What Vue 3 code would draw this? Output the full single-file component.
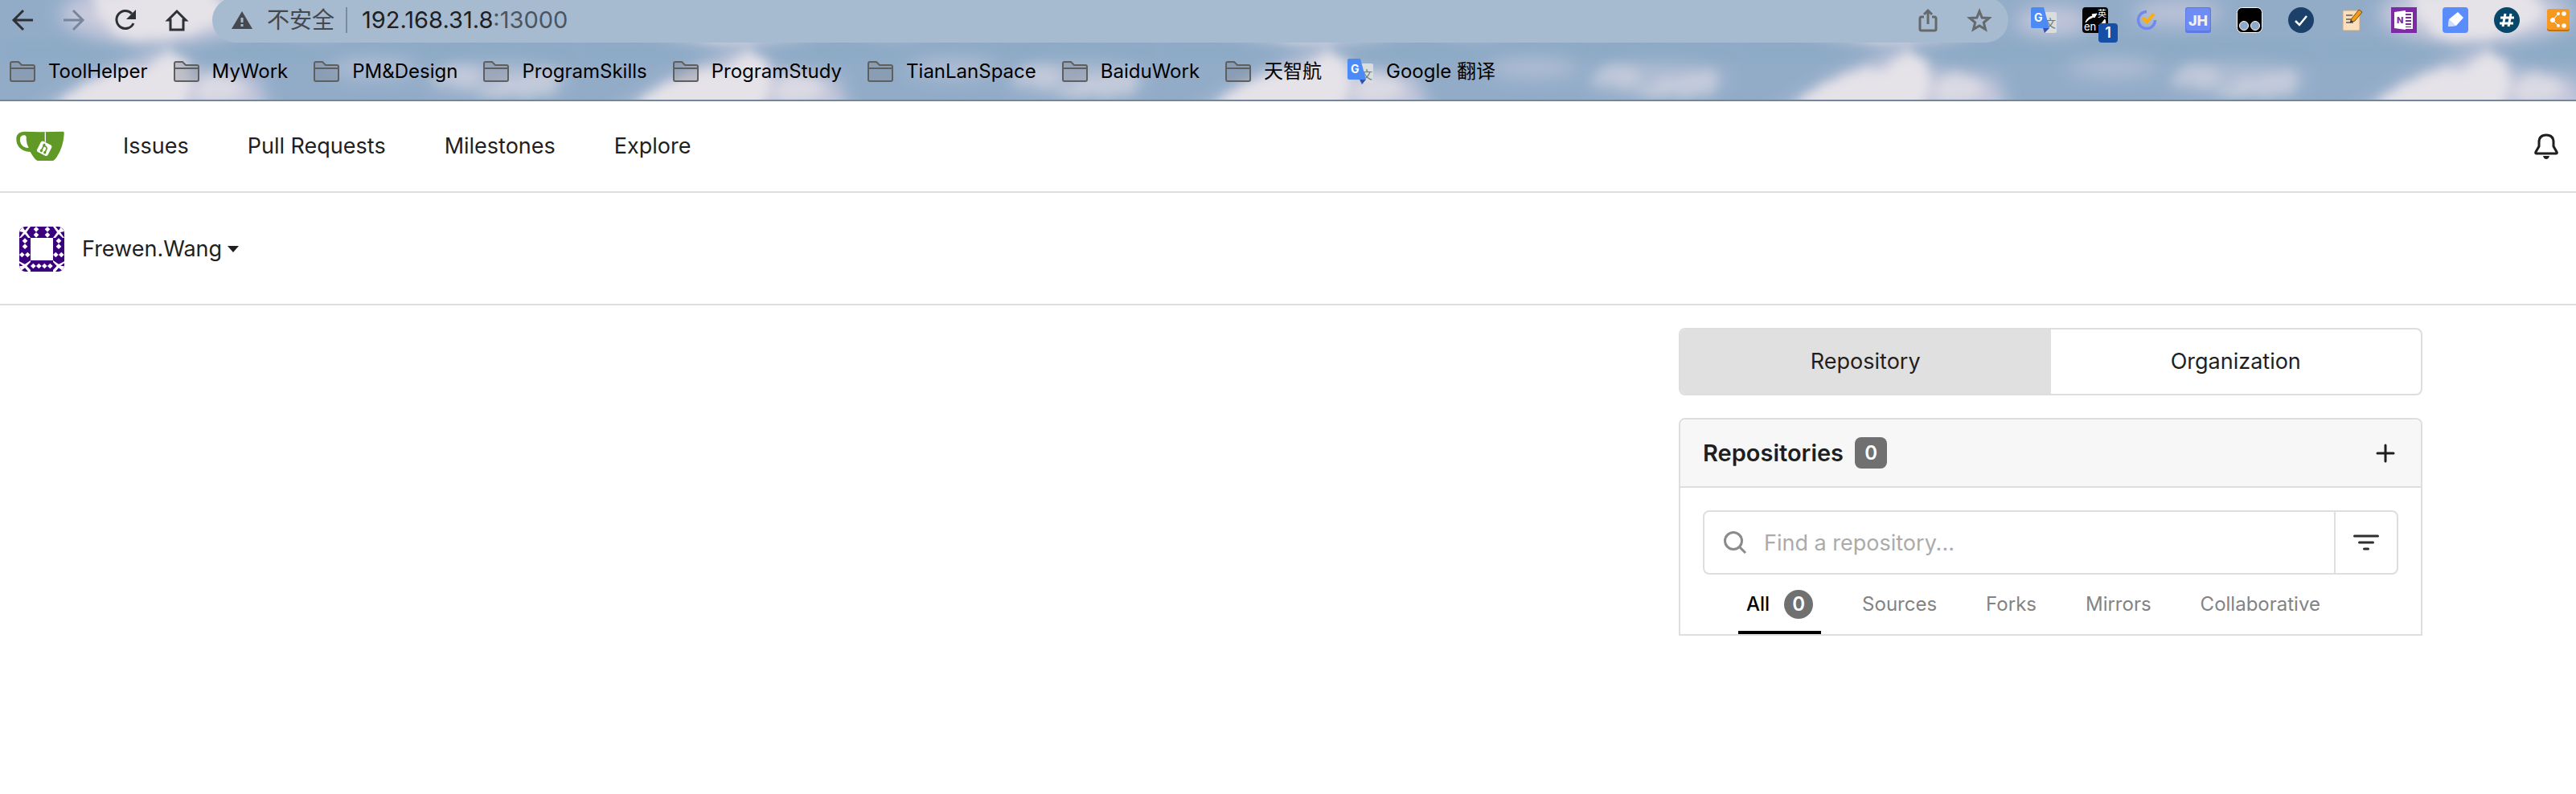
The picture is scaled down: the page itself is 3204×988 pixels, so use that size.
<script setup>
import { ref } from 'vue'

const folders = ['ToolHelper', 'MyWork', 'PM&Design', 'ProgramSkills', 'ProgramStudy', 'TianLanSpace', 'BaiduWork', '天智航']
const navLinks = ['Issues', 'Pull Requests', 'Milestones', 'Explore']
const filters = ['All', 'Sources', 'Forks', 'Mirrors', 'Collaborative']
const scope = ref('Repository')
const activeFilter = ref('All')
const query = ref('')

const diamonds = [
  [63, 10], [63, 31], [105, 10], [105, 31],
  [21, 53], [21, 74], [10, 105], [31, 105],
  [147, 53], [147, 74], [136, 105], [157, 105],
  [52, 147], [73, 147], [94, 147], [115, 147]
]
const diamondPath = diamonds.map(([x, y]) => `M${x} ${y - 10}l10 10l-10 10l-10 -10z`).join('')
</script>

<template>
  <div class="page">
    <header class="browser">
      <svg class="sky" width="100%" height="100%" aria-hidden="true">
        <defs>
          <filter id="soft" x="-20%" y="-40%" width="140%" height="180%">
            <feTurbulence type="fractalNoise" baseFrequency="0.04" numOctaves="3" seed="4" result="n" />
            <feDisplacementMap in="SourceGraphic" in2="n" scale="24" xChannelSelector="R" yChannelSelector="G" />
            <feGaussianBlur stdDeviation="7" />
          </filter>
          <filter id="haze" x="-20%" y="-40%" width="140%" height="180%">
            <feGaussianBlur stdDeviation="11" />
          </filter>
          <pattern id="clouds" width="721" height="126" patternUnits="userSpaceOnUse">
            <rect width="721" height="126" fill="#92acc8" />
            <rect x="0" y="54" width="721" height="18" fill="#89a8c4" filter="url(#haze)" />
            <g filter="url(#haze)" fill="#c8c9dc">
              <ellipse cx="195" cy="18" rx="120" ry="36" />
              <path d="M40 145L120 96L200 62L250 90L320 96L335 145Z" />
              <ellipse cx="390" cy="26" rx="46" ry="18" opacity=".9" />
              <ellipse cx="545" cy="16" rx="56" ry="16" opacity=".75" />
              <ellipse cx="465" cy="84" rx="56" ry="12" opacity=".6" />
              <ellipse cx="620" cy="98" rx="86" ry="18" opacity=".6" />
            </g>
            <g filter="url(#soft)" fill="#e5e3e8">
              <path d="M115 -14H262L280 20L236 44L165 50L126 26Z" />
              <path d="M52 150L96 108L144 90L186 88L206 64L232 74L232 104L224 150Z" />
              <path d="M236 124L250 100L284 92L304 106L280 124Z" opacity=".65" />
              <path d="M530 98L560 80L586 84L602 102L570 108Z" opacity=".35" />
              <path d="M592 116L622 98L650 94L686 84L694 116L640 124Z" opacity=".4" />
            </g>
          </pattern>
        </defs>
        <rect width="100%" height="100%" fill="url(#clouds)" />
      </svg>

      <div class="toolbar">
        <div class="controls">
          <button class="icon-btn" aria-label="Back">
            <svg width="32" height="32" viewBox="0 0 32 32" fill="none" stroke="#2d3034" stroke-width="3"><path d="M29 16H5M17 4L5 16l12 12" /></svg>
          </button>
          <button class="icon-btn" aria-label="Forward">
            <svg width="32" height="32" viewBox="0 0 32 32" fill="none" stroke="#76869b" stroke-width="3"><path d="M3 16h24M15 4l12 12l-12 12" /></svg>
          </button>
          <button class="icon-btn" aria-label="Reload">
            <svg width="32" height="32" viewBox="0 0 32 32"><path d="M26 20A11 11 0 1 1 24 8" fill="none" stroke="#2d3034" stroke-width="3" /><path d="M29 3v12H17z" fill="#2d3034" /></svg>
          </button>
          <button class="icon-btn" aria-label="Home">
            <svg width="32" height="32" viewBox="0 0 32 32" fill="none" stroke="#2d3034" stroke-width="3"><path d="M16 5L5 16h3v12h16V16h3z" /></svg>
          </button>
        </div>

        <div class="address">
          <svg width="26" height="24" viewBox="0 0 26 24" aria-hidden="true"><path d="M13 1L26 23H0z" fill="#45494f" /><path d="M13 9v6M13 17v3" stroke="#a6bad0" stroke-width="3" /></svg>
          <span class="insecure">不安全</span>
          <span class="rule"></span>
          <span class="url">192.168.31.8<span class="port">:13000</span></span>
          <button class="icon-btn push" aria-label="Share">
            <svg width="32" height="32" viewBox="0 0 32 32" fill="none" stroke="#66696c" stroke-width="3"><path d="M11 12H8q-2 0-2 2v13q0 2 2 2h16q2 0 2-2V14q0-2-2-2h-3M16 21V4M11 9l5-5l5 5" /></svg>
          </button>
          <button class="icon-btn" aria-label="Bookmark">
            <svg width="32" height="32" viewBox="0 0 32 32" fill="none" stroke="#66696c" stroke-width="3"><path d="M16 5l3.200 8l8.800.5l-6.700 5.600l2.200 8.500L16 23l-7.500 4.600l2.200-8.500L4 13.500l8.800-.5z" /></svg>
          </button>
        </div>

        <div class="extensions">
          <button class="icon-btn" aria-label="Google Translate">
            <svg width="32" height="32" viewBox="0 0 32 32"><path d="M14 6h16q2 0 2 2v22q0 2-2 2H18z" fill="#dbdcdc" /><text x="17" y="25" font-size="14" fill="#607d86" class="cjk">文</text><path d="M15 26h8l-6 6z" fill="#3850b5" /><path d="M2 0h14l7 26H2q-2 0-2-2V2q0-2 2-2z" fill="#4c8bf5" /><text x="4" y="18" font-size="14" font-weight="700" fill="#fff">G</text></svg>
          </button>
          <button class="icon-btn with-badge" aria-label="English dictionary">
            <svg width="32" height="32" viewBox="0 0 32 32"><rect width="32" height="32" rx="4" fill="#050505" /><path d="M4 19Q6 12 13 11l-1-2l6-1l-3 5l-1-1Q8 14 4 19M28 15l1 4q-4 4-9 4q5-3 8-8" fill="#fff" stroke="#fff" /><text x="19" y="12" font-size="11" fill="#fff" class="cjk">英</text><text x="2" y="29" font-size="13" fill="#fff">en</text></svg>
            <span class="badge">1</span>
          </button>
          <button class="icon-btn" aria-label="Tasks">
            <svg width="32" height="32" viewBox="0 0 32 32" fill="none"><path d="M16 5.500A10.500 10.500 0 1 0 26.500 16" stroke="#7189ee" stroke-width="3.500" /><path d="M11 13l5 5l9-10" stroke="#ffad0d" stroke-width="4" /></svg>
          </button>
          <button class="icon-btn" aria-label="JH">
            <svg width="32" height="32" viewBox="0 0 32 32"><rect width="32" height="32" rx="3" fill="#5c7ae4" /><rect x="1" y="1" width="30" height="28" rx="3" fill="#6f8cf5" /><text x="16" y="23" text-anchor="middle" font-size="18" font-weight="800" fill="#f2f0ea">JH</text></svg>
          </button>
          <button class="icon-btn" aria-label="Userscripts">
            <svg width="32" height="32" viewBox="0 0 32 32"><rect x=".5" y=".5" width="31" height="31" rx="6" fill="#000" stroke="#fff" /><g fill="#8faac8" stroke="#fff"><circle cx="9" cy="23" r="5.500" /><circle cx="23" cy="23" r="5.500" /></g></svg>
          </button>
          <button class="icon-btn" aria-label="Check">
            <svg width="32" height="32" viewBox="0 0 32 32"><circle cx="16" cy="16" r="16" fill="#1b416b" /><path d="M9 17l5 5l9-11" fill="none" stroke="#fff" stroke-width="2.500" /></svg>
          </button>
          <button class="icon-btn" aria-label="Notes">
            <svg width="32" height="32" viewBox="0 0 32 32"><rect x="4" y="4" width="21" height="25" rx="1" fill="#fbdfbd" stroke="#c5a680" /><path d="M8 10h8M8 15h9M8 19h9" stroke="#5e5a55" stroke-width="1.500" /><path d="M13 19l2-5L24 3l4 3l-9 11z" fill="#f39a17" stroke="#76500f" /><path d="M13 19l1-3l3 2z" fill="#333" /></svg>
          </button>
          <button class="icon-btn" aria-label="OneNote">
            <svg width="32" height="32" viewBox="0 0 32 32"><rect width="32" height="32" fill="#7d2ba5" /><path d="M17 7h9v19h-9" fill="none" stroke="#fff" stroke-width="2" /><path d="M18 11h7M18 15h7M18 19h7M18 23h7" stroke="#fff" stroke-width="2" /><path d="M4 6l14-2v24L4 26z" fill="#fff" /><text x="7" y="20" font-size="11" font-weight="800" fill="#7d2ba5">N</text></svg>
          </button>
          <button class="icon-btn" aria-label="Highlighter">
            <svg width="32" height="32" viewBox="0 0 32 32"><rect width="32" height="32" rx="4" fill="#5b8cfb" /><path d="M8 15L19 6l7 7l-9 10l-10 1z" fill="#fff" /><path d="M8 15l9 8l-10 1z" fill="#cfdcff" /></svg>
          </button>
          <button class="icon-btn" aria-label="Hash">
            <svg width="32" height="32" viewBox="0 0 32 32"><circle cx="16" cy="16" r="16" fill="#07476a" /><path d="M14 8l-3 16M21 8l-3 16M8 13h17M7 20h17" stroke="#fff" stroke-width="3" /></svg>
          </button>
          <button class="icon-btn" aria-label="Share graph">
            <svg width="32" height="32" viewBox="0 0 32 32"><rect x="2" y="4" width="28" height="26" rx="3" fill="#b9731c" /><rect x="2" y="2" width="28" height="26" rx="3" fill="#f7981f" /><path d="M16 8L9 16l7 7" fill="none" stroke="#fff" stroke-width="1" /><g fill="#fff"><circle cx="9" cy="16" r="3" /><circle cx="16" cy="8" r="2" /><circle cx="23" cy="8" r="2.800" /><circle cx="16" cy="23" r="2" /><circle cx="23" cy="23" r="2.800" /></g></svg>
          </button>
        </div>
      </div>

      <nav class="bookmarks" aria-label="Bookmarks">
        <a v-for="name in folders" :key="name" href="#">
          <svg width="32" height="32" viewBox="0 0 32 32" aria-hidden="true"><path d="M1 26V6q0-2 2-2h8l4 4h14q2 0 2 2v16q0 2-2 2H3q-2 0-2-2z" fill="#77808f" fill-opacity=".35" stroke="#5f5f60" stroke-width="2" /><path d="M1 12h30" stroke="#5f5f60" stroke-width="2" /></svg>
          {{ name }}
        </a>
        <a href="#">
          <svg width="32" height="32" viewBox="0 0 32 32" aria-hidden="true"><path d="M14 6h16q2 0 2 2v22H18z" fill="#dbdcdc" /><text x="17" y="25" font-size="14" fill="#607d86" class="cjk">文</text><path d="M15 26h8l-5 6z" fill="#3850b5" /><path d="M2 0h14l7 26H2q-2 0-2-2V2q0-2 2-2z" fill="#4c8bf5" /><text x="4" y="18" font-size="14" font-weight="700" fill="#fff">G</text></svg>
          Google 翻译
        </a>
      </nav>
    </header>

    <nav class="navbar" aria-label="Main">
      <a class="logo" href="#" aria-label="Home">
        <svg width="60" height="38" viewBox="0 0 180 112">
          <path d="M30 1L90 3L176 1Q180 1 179 12Q176 60 152 96Q143 110 136 110H80Q72 110 53 77Q24 75 10 58Q0 44 1 25Q3 3 30 1Z" fill="#609926" />
          <path d="M33 15Q40 18 38 30Q39 48 47 62Q26 62 18 46Q12 33 16 22Q22 13 33 15Z" fill="#fff" />
          <path d="M109 3V40" stroke="#fff" stroke-width="4" />
          <rect x="83" y="42" width="45" height="45" rx="8" fill="#fff" transform="rotate(27 105.500 64.500)" />
          <g transform="rotate(27 105.500 64.500)" stroke="#609926" stroke-width="5" fill="none"><path d="M99 48V78M99 56Q114 54 114 64V77" /></g>
          <g transform="rotate(27 105.500 64.500)" fill="#609926"><circle cx="99" cy="77" r="5" /><circle cx="114" cy="77" r="5" /><circle cx="99" cy="54" r="5" /></g>
        </svg>
      </a>
      <a v-for="link in navLinks" :key="link" href="#">{{ link }}</a>
      <a class="bell" href="#" aria-label="Notifications">
        <svg width="32" height="32" viewBox="0 0 32 32"><path d="M16 2Q25 2 25 11V16L29 23Q30 25 28 25H4Q2 25 3 23L7 16V11Q7 2 16 2Z" fill="none" stroke="#1f1f1f" stroke-width="3" /><path d="M12 28h8q-1 4-4 4t-4-4z" fill="#1f1f1f" /></svg>
      </a>
    </nav>

    <div class="context">
      <button class="account">
        <svg class="avatar" width="56" height="56" viewBox="0 0 168 168" aria-hidden="true">
          <rect width="168" height="168" fill="#3a007d" />
          <rect x="42" y="42" width="84" height="84" fill="#fff" />
          <path :d="diamondPath" fill="#fff" />
          <path d="M0 18L12 0L21 14L33 0H42L27 21L42 42H33L21 28L6 42H0L15 21ZM168 18L156 0L147 14L135 0H126L141 21L126 42H135L147 28L162 42H168L153 21ZM0 130L21 140L42 126V132L28 147L42 162V168H33L21 154L6 165L0 160V148L14 146L0 136ZM168 130L147 140L126 126V132L140 147L126 162V168H135L147 154L162 165L168 160V148L154 146L168 136Z" fill="#fff" />
        </svg>
        <span>Frewen.Wang</span>
        <svg width="14" height="8" viewBox="0 0 14 8" aria-hidden="true"><path d="M0 0h14L7 8z" fill="#1f1f1f" /></svg>
      </button>
    </div>

    <main class="dashboard">
      <section class="feed" aria-label="Activity"></section>
      <aside class="side">
        <div class="switcher">
          <button v-for="s in ['Repository', 'Organization']" :key="s" :class="{ active: scope === s }" @click="scope = s">{{ s }}</button>
        </div>
        <section class="repos">
          <div class="repos-head">
            <h1>Repositories</h1>
            <span class="count">0</span>
            <a class="push" href="#" aria-label="New repository">
              <svg width="32" height="32" viewBox="0 0 32 32" stroke="#1f1f1f" stroke-width="3" stroke-linecap="round"><path d="M16 6v20M6 16h20" /></svg>
            </a>
          </div>
          <div class="repos-body">
            <div class="search">
              <label for="repo-search" aria-label="Find a repository">
                <svg width="32" height="32" viewBox="0 0 32 32" fill="none" stroke="#8b8b8b" stroke-width="3"><circle cx="14" cy="14" r="10.500" /><path d="M21.500 21.500L29 29" /></svg>
              </label>
              <input id="repo-search" v-model="query" type="text" placeholder="Find a repository...">
              <button aria-label="Filter">
                <svg width="32" height="32" viewBox="0 0 32 32" stroke="#2e2e2e" stroke-width="3" stroke-linecap="round"><path d="M1.500 8h29M7.500 16h17M13.500 24h5" /></svg>
              </button>
            </div>
            <div class="tabs">
              <a v-for="f in filters" :key="f" href="#" :class="{ active: activeFilter === f }" @click.prevent="activeFilter = f">{{ f }}<span v-if="activeFilter === f" class="dot">0</span></a>
            </div>
          </div>
        </section>
      </aside>
    </main>
  </div>
</template>

<style>
body { background: #fff; }
</style>

<style scoped>
* { box-sizing: border-box; }
.page {
  font-family: Inter, "Noto Sans CJK SC", sans-serif;
  font-size: 27px;
  line-height: 36px;
  color: #1f1f1f;
}
a { color: inherit; text-decoration: none; }
button { font: inherit; color: inherit; background: none; border: 0; padding: 0; }
svg { display: block; flex: none; }
.cjk { font-family: "Noto Sans CJK SC", sans-serif; }
.push { margin-left: auto; }

.browser { position: relative; overflow: hidden; border-bottom: 2px solid #71869f; }
.sky { position: absolute; inset: 0; }
.toolbar { position: relative; display: flex; align-items: center; height: 56px; margin-top: -3px; }
.controls { display: flex; gap: 32px; padding: 0 28px 0 12px; }
.icon-btn { display: block; flex: none; width: 32px; height: 32px; }
.address {
  flex: 1;
  display: flex;
  align-items: center;
  height: 56px;
  padding: 0 20px 0 24px;
  border-radius: 28px;
  background: #a6bad0;
  font-size: 28px;
  color: #44484e;
}
.insecure { margin-left: 18px; }
.rule { width: 2px; height: 32px; margin: 0 18px 0 14px; background: #7c8c9f; }
.url { font-size: 29px; color: #1d2023; }
.port { color: #4b5560; }
.address .icon-btn + .icon-btn { margin-left: 32px; }
.extensions { display: flex; gap: 32px; padding: 0 6px 0 28px; }
.with-badge { position: relative; }
.badge {
  position: absolute;
  left: 20px;
  top: 20px;
  width: 24px;
  height: 24px;
  border-radius: 4px;
  background: #164fa8;
  color: #fff;
  font-size: 18px;
  font-weight: 600;
  line-height: 24px;
}
.bookmarks {
  position: relative;
  display: flex;
  gap: 32px;
  height: 71px;
  padding: 0 12px;
  align-items: center;
  font-size: 24px;
  color: #000;
}
.bookmarks a { display: flex; align-items: center; gap: 16px; white-space: nowrap; }

.navbar { display: flex; align-items: center; height: 114px; padding: 0 21px 0 20px; border-bottom: 2px solid #dedede; }
.navbar a { margin-left: 73px; }
.navbar .logo { margin-left: 0; }
.navbar .bell { margin-left: auto; }

.context { display: flex; align-items: center; height: 140px; padding: 2px 24px 0; border-bottom: 2px solid #dedede; }
.account { display: flex; align-items: center; }
.account span { margin: 0 7px 0 22px; }
.avatar { border-radius: 8px; }

.dashboard { display: grid; grid-template-columns: minmax(0, 1850fr) minmax(0, 925fr); gap: 47px; padding: 28px 191px; }
.switcher { display: flex; border: 2px solid #dedede; border-radius: 8px; overflow: hidden; }
.switcher button { flex: 1; height: 80px; }
.switcher .active { background: #e0e0e0; }
.repos { margin-top: 28px; border: 2px solid #dedede; border-radius: 8px 8px 0 0; }
.repos-head { display: flex; align-items: center; height: 85px; padding: 0 28px; background: #f7f7f7; border-bottom: 2px solid #dedede; border-radius: 6px 6px 0 0; }
h1 { margin: 0 14px 0 0; font-size: 29px; font-weight: 600; }
.count { width: 40px; height: 39px; border-radius: 8px; background: #707070; color: #fff; font-size: 24px; font-weight: 600; line-height: 40px; text-align: center; }
.repos-body { padding: 28px 28px 0; }
.search { display: flex; align-items: center; height: 80px; border: 2px solid #dedede; border-radius: 8px; }
.search label { padding: 0 20px 0 22px; }
.search input { flex: 1; min-width: 0; height: 76px; padding: 0; border: 0; outline: 0; background: none; font: inherit; color: inherit; }
.search input::placeholder { color: #ababab; opacity: 1; }
.search button { height: 76px; padding: 0 22px; border-left: 2px solid #dedede; }
.tabs { display: flex; gap: 41px; padding: 0 44px; height: 74px; font-size: 24px; color: #838383; }
.tabs a { display: flex; align-items: center; gap: 18px; padding: 4px 10px 0; border-bottom: 4px solid transparent; }
.tabs .active { border-color: #000; color: #000; font-weight: 500; }
.dot { width: 36px; height: 36px; border-radius: 50%; background: #707070; color: #fff; font-weight: 600; text-align: center; }
</style>
